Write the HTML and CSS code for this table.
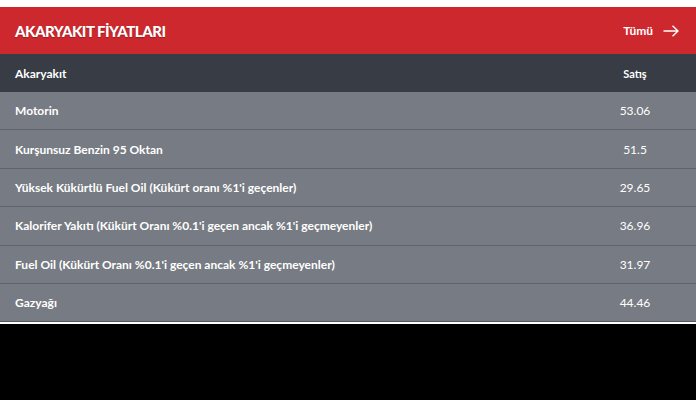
FILE: index.html
```html
<!DOCTYPE html>
<html lang="tr">
<head>
<meta charset="utf-8">
<link rel="stylesheet" href="styles.css">
</head>
<body>
<div class="page">
  <div class="widget">
    <div class="title-bar">
      <span class="title">AKARYAKIT FİYATLARI</span>
      <a class="all" href="#">Tümü
        <svg class="arrow" width="16" height="12" viewBox="0 0 16 12"><path d="M0.5 6H15M9.5 0.7L15 6L9.5 11.3" fill="none" stroke="#fff" stroke-width="1.4"/></svg>
      </a>
    </div>
    <div class="row head">
      <span class="name">Akaryakıt</span>
      <span class="val">Satış</span>
    </div>
    <div class="row"><span class="name">Motorin</span><span class="val">53.06</span></div>
    <div class="row"><span class="name">Kurşunsuz Benzin 95 Oktan</span><span class="val">51.5</span></div>
    <div class="row"><span class="name">Yüksek Kükürtlü Fuel Oil (Kükürt oranı %1'i geçenler)</span><span class="val">29.65</span></div>
    <div class="row"><span class="name">Kalorifer Yakıtı (Kükürt Oranı %0.1'i geçen ancak %1'i geçmeyenler)</span><span class="val">36.96</span></div>
    <div class="row"><span class="name">Fuel Oil (Kükürt Oranı %0.1'i geçen ancak %1'i geçmeyenler)</span><span class="val">31.97</span></div>
    <div class="row last"><span class="name">Gazyağı</span><span class="val">44.46</span></div>
  </div>
</div>
</body>
</html>
```
FILE: styles.css
```css
html, body {
  margin: 0;
  padding: 0;
  background: #000;
}
body {
  font-family: Lato, "Open Sans", sans-serif;
  color: #fff;
}
.page {
  background: #fff;
  padding: 7px 0 2px;
}
.widget {
  background: #777b83;
}
.title-bar {
  height: 47px;
  background: #cc282d;
  display: flex;
  align-items: center;
  justify-content: space-between;
  padding: 0 17px 0 15px;
}
.title {
  font-weight: 900;
  font-size: 15px;
  letter-spacing: -0.5px;
  text-shadow: 0 1px 1px rgba(0,0,0,0.25);
}
.all {
  color: #fff;
  text-decoration: none;
  font-weight: 700;
  font-size: 12px;
  display: flex;
  align-items: center;
  gap: 10px;
}
.arrow {
  display: block;
}
.row {
  display: flex;
  align-items: center;
  height: 38.4px;
  box-sizing: border-box;
  border-bottom: 1px solid #5f636b;
  padding-left: 15px;
}
.row.head {
  height: 38px;
  background: #383c44;
  border-bottom: none;
}
.row.last {
  border-bottom: 1px solid #55585f;
}
.name {
  flex: 1;
  font-weight: 700;
  font-size: 12px;
}
.val {
  width: 122px;
  text-align: center;
  font-size: 12px;
}
.head .name,
.head .val {
  font-weight: 700;
  font-size: 12px;
}
.head .val {
  font-size: 11px;
}
```
